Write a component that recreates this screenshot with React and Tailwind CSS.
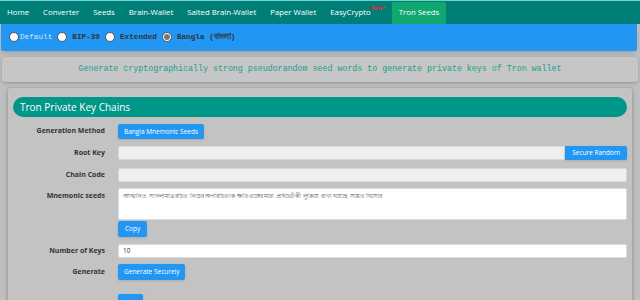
import React from 'react';

const navItems = [
  { label: 'Home' },
  { label: 'Converter' },
  { label: 'Seeds' },
  { label: 'Brain-Wallet' },
  { label: 'Salted Brain-Wallet' },
  { label: 'Paper Wallet' },
  { label: 'EasyCrypto', isNew: true },
  { label: 'Tron Seeds', active: true },
];

const radios = [
  { label: 'Default', light: true },
  { label: 'BIP-39' },
  { label: 'Extended' },
  { label: 'Bangla (বাংলা)', checked: true },
];

const Radio = ({ checked }) => (
  <span className="w-[10px] h-[10px] rounded-full bg-white border border-[#555] flex items-center justify-center shrink-0">
    {checked && <span className="w-[6px] h-[6px] rounded-full bg-[#777]"></span>}
  </span>
);

const Btn = ({ children, className = '' }) => (
  <button className={`bg-[#2196f3] text-white text-[6.5px] rounded-[2px] shadow-sm px-[6px] ${className}`}>
    {children}
  </button>
);

const Row = ({ label, children, className = '', top = false }) => (
  <div className={`flex ${top ? 'items-start' : 'items-center'} ${className}`}>
    <div className={`w-[92px] text-right font-bold text-[7px] text-[#333] ${top ? 'pt-[3px]' : ''}`}>{label}</div>
    <div className="flex-1 ml-[13px] flex">{children}</div>
  </div>
);

export default function App() {
  return (
    <div className="w-[640px] h-[300px] overflow-hidden bg-[#bfbfbf] font-['Open_Sans',sans-serif]">
      {/* Top nav */}
      <nav className="h-[24px] bg-[#007f79] border-t border-[#6fd3cd] flex items-end">
        {navItems.map((item) => (
          <div
            key={item.label}
            className={`h-[22px] px-[7px] flex items-center text-[7.8px] text-white rounded-t-[2px] ${
              item.active ? 'bg-[#10a870]' : ''
            }`}
          >
            <span>{item.label}</span>
            {item.isNew && (
              <sup className="text-[5px] font-bold text-[#ff1a1a] -mt-[6px]">New*</sup>
            )}
          </div>
        ))}
      </nav>

      {/* Seed type bar */}
      <div className="ml-[1px] w-[636px] h-[27px] bg-[#2196f3] rounded-b-[2px] shadow-md flex items-center pl-[8px] font-['Liberation_Mono',monospace] text-[7.7px]">
        {radios.map((r, i) => (
          <label key={r.label} className={`flex items-center ${i > 0 ? 'ml-[5px]' : ''}`}>
            <Radio checked={r.checked} />
            <span
              className={
                r.light
                  ? 'ml-[1px] text-[#d6e6f4]'
                  : 'ml-[5px] font-bold text-[#333]'
              }
            >
              {r.label}
            </span>
          </label>
        ))}
      </div>

      {/* Info */}
      <div className="mt-[6px] mx-[2px] h-[25px] bg-[#c6c6c6] rounded-[3px] shadow-[0_1px_3px_rgba(0,0,0,0.25)] flex items-center justify-center font-['Liberation_Mono',monospace] text-[8.3px] text-[#1aa08c]">
        Generate cryptographically strong pseudorandom seed words to generate private keys of Tron wallet
      </div>

      {/* Card */}
      <div className="mt-[6px] ml-[8px] w-[624px] h-[220px] bg-[#c3c3c3] rounded-t-[3px] shadow-[0_1px_4px_rgba(0,0,0,0.3)] pt-[9px] px-[5px]">
        <div className="h-[20px] rounded-full bg-[#009688] text-white text-[10px] flex items-center pl-[7px]">
          Tron Private Key Chains
        </div>

        <Row label="Generation Method" className="mt-[7px]">
          <Btn className="h-[15px]">Bangla Mnemonic Seeds</Btn>
        </Row>

        <Row label="Root Key" className="mt-[7px]">
          <div className="flex-1 h-[14px] bg-[#efefef] border border-[#d8d8d8] rounded-l-[2px]"></div>
          <Btn className="h-[14px] rounded-l-none px-[7px]">Secure Random</Btn>
        </Row>

        <Row label="Chain Code" className="mt-[8px]">
          <div className="flex-1 h-[14px] bg-[#efefef] border border-[#d8d8d8] rounded-[2px]"></div>
        </Row>

        <Row label="Mnemonic seeds" className="mt-[6px]" top>
          <div className="flex-1 h-[32px] bg-white border border-[#ddd] rounded-[2px] px-[4px] pt-[3px] text-[6px] text-[#555] leading-[9px]">
            আত্মনিত সাফল্যমাত্র রচিত নিচের অপরিচিতাক ক্ষতিগ্রস্তের মধ্যে প্রাইভেট কী লুকিয়ে রাখা হয়েছে সঙ্কেত হিসেবে
          </div>
        </Row>

        <Row label="" className="mt-[1px]">
          <Btn className="h-[16px] px-[7px]">Copy</Btn>
        </Row>

        <Row label="Number of Keys" className="mt-[7px]">
          <div className="flex-1 h-[14px] bg-white border border-[#ddd] rounded-[2px] px-[4px] flex items-center text-[6.5px] text-[#333]">
            10
          </div>
        </Row>

        <Row label="Generate" className="mt-[6px]">
          <Btn className="h-[16px] px-[6px]">Generate Securely</Btn>
        </Row>

        <Row label="" className="mt-[14px]">
          <Btn className="h-[16px] w-[25px]">&nbsp;</Btn>
        </Row>
      </div>
    </div>
  );
}
